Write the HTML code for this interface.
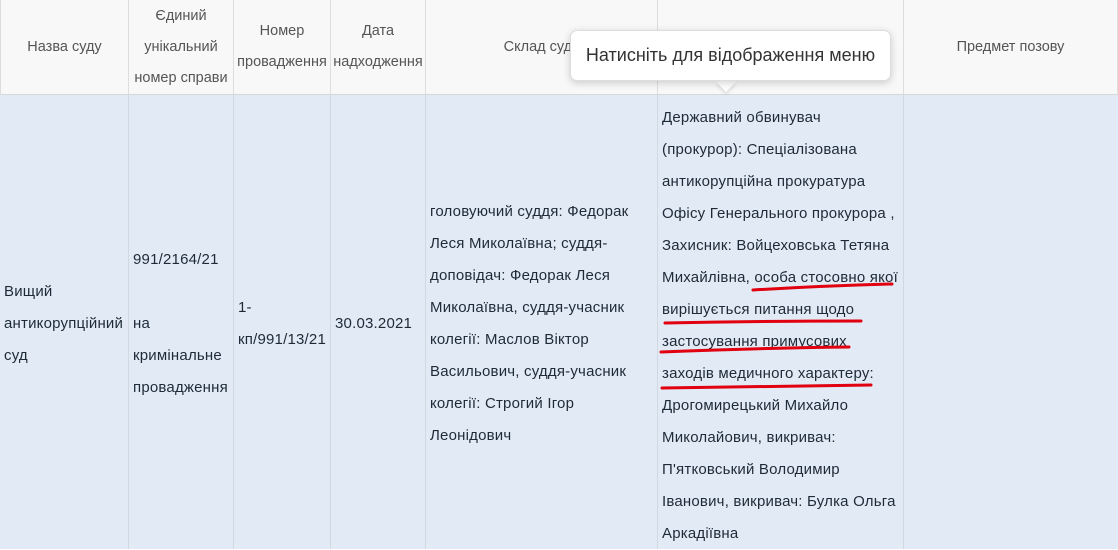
<!DOCTYPE html>
<html><head><meta charset="utf-8"><style>
body{margin:0;width:1118px;height:549px;overflow:hidden;background:#fff;font-family:"Liberation Sans",Arial,sans-serif;position:relative}
.h{position:absolute;top:0;height:95px;background:#f8f8f8;border-right:1px solid #ddd;border-bottom:1px solid #d8d8d8;box-sizing:border-box;color:#555;font-size:14.5px;line-height:31px;text-align:center;display:flex;align-items:center;justify-content:center}
.b{position:absolute;top:95px;height:454px;background:#e2ebf5;border-right:1px solid #d0d8e0;box-sizing:border-box;color:#1e2a38;font-size:15px;letter-spacing:0.2px;line-height:32px;display:flex;align-items:center;padding:4px 4px 0;white-space:nowrap}
.tt{position:absolute;left:570px;top:30px;width:321px;height:51px;background:#fff;border:1px solid #ddd;border-radius:7px;box-shadow:0 2px 8px rgba(0,0,0,.18);box-sizing:border-box;font-size:18px;color:#333;text-align:center;line-height:49px}
.ar{position:absolute;left:719px;top:75px;width:14px;height:14px;background:#fff;transform:rotate(45deg);box-shadow:2px 2px 3px rgba(0,0,0,.1)}
</style></head><body>
<div class="h" style="left:0;width:129px;border-left:1px solid #ddd">Назва суду</div>
<div class="h" style="left:129px;width:105px">Єдиний<br>унікальний<br>номер справи</div>
<div class="h" style="left:234px;width:97px">Номер<br>провадження</div>
<div class="h" style="left:331px;width:95px">Дата<br>надходження</div>
<div class="h" style="left:426px;width:232px">Склад суду</div>
<div class="h" style="left:658px;width:246px"></div>
<div class="h" style="left:904px;width:214px">Предмет позову</div>

<div class="b" style="left:0;width:129px"><div>Вищий<br>антикорупційний<br>суд</div></div>
<div class="b" style="left:129px;width:105px"><div>991/2164/21<br><br>на<br>кримінальне<br>провадження</div></div>
<div class="b" style="left:234px;width:97px"><div>1-<br>кп/991/13/21</div></div>
<div class="b" style="left:331px;width:95px"><div>30.03.2021</div></div>
<div class="b" style="left:426px;width:232px"><div>головуючий суддя: Федорак<br>Леся Миколаївна; суддя-<br>доповідач: Федорак Леся<br>Миколаївна, суддя-учасник<br>колегії: Маслов Віктор<br>Васильович, суддя-учасник<br>колегії: Строгий Ігор<br>Леонідович</div></div>
<div class="b" style="left:658px;width:246px;align-items:flex-start;padding-top:7px"><div>Державний обвинувач<br>(прокурор): Спеціалізована<br>антикорупційна прокуратура<br>Офісу Генерального прокурора ,<br>Захисник: Войцеховська Тетяна<br>Михайлівна, особа стосовно якої<br>вирішується питання щодо<br>застосування примусових<br>заходів медичного характеру:<br>Дрогомирецький Михайло<br>Миколайович, викривач:<br>П'ятковський Володимир<br>Іванович, викривач: Булка Ольга<br>Аркадіївна</div></div>
<div class="b" style="left:904px;width:214px;border-right:none"></div>

<svg style="position:absolute;left:0;top:0" width="1118" height="549"><g stroke="#e00010" stroke-width="3" fill="none" stroke-linecap="round">
<path d="M753 290 Q820 286 892 284"/>
<path d="M665 323 Q760 321 861 321"/>
<path d="M661 352 Q760 348 849 347"/>
<path d="M662 388 Q770 386 871 385"/>
</g></svg>
<div class="ar"></div>
<div class="tt">Натисніть для відображення меню</div>
</body></html>
